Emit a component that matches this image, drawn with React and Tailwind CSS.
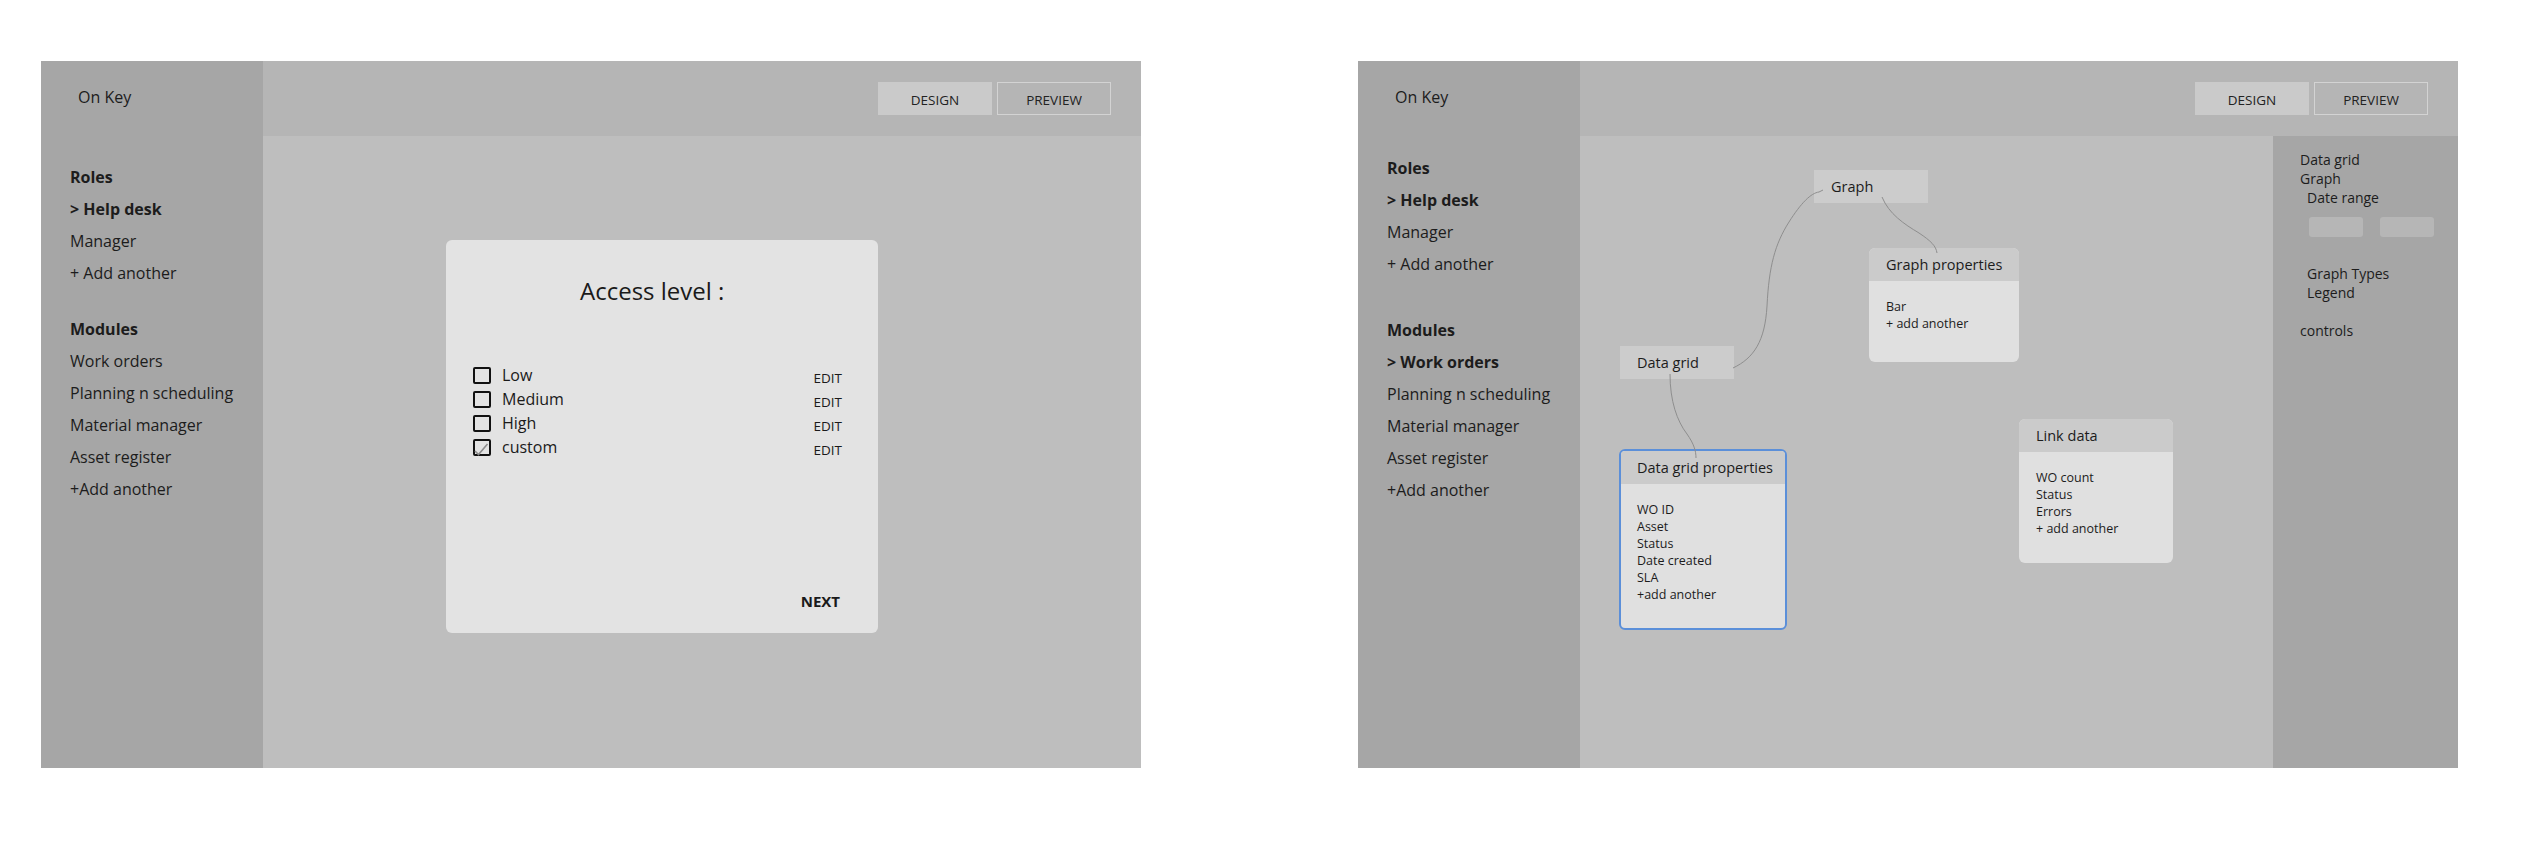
import React from 'react';

const roles = ['> Help desk', 'Manager', '+ Add another'];

function Sidebar({ rolesGap, modulesGap, modules }) {
  return (
    <div className="w-[222px] shrink-0 bg-[#a6a6a6] pl-[29px] text-[16px] text-[#1c1c1c]">
      <div className="pl-[8px] pt-[24px] h-[48px] leading-[24px]">On Key</div>
      <div className={rolesGap}>
        <div className="h-8 flex items-center font-bold">Roles</div>
        {roles.map((r, i) => (
          <div key={r} className={`h-8 flex items-center ${i === 0 ? 'font-bold' : ''}`}>{r}</div>
        ))}
      </div>
      <div className={modulesGap}>
        <div className="h-8 flex items-center font-bold">Modules</div>
        {modules.map((m) => (
          <div key={m.label} className={`h-8 flex items-center ${m.active ? 'font-bold' : ''}`}>{m.label}</div>
        ))}
      </div>
    </div>
  );
}

function Header() {
  return (
    <div className="h-[75px] shrink-0 bg-[#b5b5b5] flex items-center justify-end gap-[5px] pr-[30px] text-[13.5px] text-[#222]">
      <div className="w-[114px] h-[33px] pt-[3px] bg-[#cacaca] flex items-center justify-center">DESIGN</div>
      <div className="w-[114px] h-[33px] pt-[3px] border border-[#d3d3d3] flex items-center justify-center">PREVIEW</div>
    </div>
  );
}

function Checkbox({ checked }) {
  return (
    <div className="relative w-[18px] h-[17px] border-2 border-[#111] rounded-[2px]">
      {checked && (
        <svg className="absolute -left-[2px] -top-[2px]" width="18" height="17" viewBox="0 0 18 17">
          <path d="M2 12 L5.5 15.5 L14.5 5" fill="none" stroke="#8c8c8c" strokeWidth="1.6" />
        </svg>
      )}
    </div>
  );
}

function AccessCard() {
  const levels = [
    { label: 'Low' },
    { label: 'Medium' },
    { label: 'High' },
    { label: 'custom', checked: true },
  ];
  return (
    <div className="w-[432px] h-[393px] bg-[#e3e3e3] rounded-[6px] flex flex-col text-[#1a1a1a]">
      <div className="pt-[35px] pl-[134px] text-[24px] leading-[32px]">Access level :</div>
      <div className="mt-[56px] pl-[27px] pr-[36px]">
        {levels.map((l) => (
          <div key={l.label} className="h-6 flex items-center">
            <Checkbox checked={l.checked} />
            <span className="ml-[11px] text-[16px]">{l.label}</span>
            <span className="ml-auto text-[13.5px] mt-[6px]">EDIT</span>
          </div>
        ))}
      </div>
      <div className="mt-auto pb-[22px] pr-[38px] flex justify-end">
        <span className="text-[15px] font-bold leading-[20px]">NEXT</span>
      </div>
    </div>
  );
}

function PropCard({ title, items, className, selected }) {
  return (
    <div
      className={`absolute rounded-[6px] bg-[#e0e0e0] overflow-hidden text-[#1c1c1c] ${
        selected ? 'border-2 border-[#5b8fd9]' : ''
      } ${className}`}
    >
      <div className={`h-[33px] bg-[#cbcbcb] flex items-center text-[14.5px] ${selected ? 'pl-[16px]' : 'pl-[17px]'}`}>{title}</div>
      <div className={`pt-[17px] text-[12.5px] leading-[17px] ${selected ? 'pl-[16px]' : 'pl-[17px]'}`}>
        {items.map((it) => (
          <div key={it}>{it}</div>
        ))}
      </div>
    </div>
  );
}

function NodeBox({ label, className }) {
  return (
    <div className={`absolute w-[114px] h-[33px] bg-[#cccccc] flex items-center pl-[17px] text-[14.5px] text-[#1c1c1c] ${className}`}>
      {label}
    </div>
  );
}

function Canvas() {
  return (
    <div className="relative flex-1 bg-[#bebebe]">
      <NodeBox label="Graph" className="left-[234px] top-[34px]" />
      <NodeBox label="Data grid" className="left-[40px] top-[210px]" />
      <PropCard title="Graph properties" items={['Bar', '+ add another']} className="left-[289px] top-[112px] w-[150px] h-[114px]" />
      <PropCard
        title="Data grid properties"
        items={['WO ID', 'Asset', 'Status', 'Date created', 'SLA', '+add another']}
        className="left-[39px] top-[313px] w-[168px] h-[181px]"
        selected
      />
      <PropCard
        title="Link data"
        items={['WO count', 'Status', 'Errors', '+ add another']}
        className="left-[439px] top-[283px] w-[154px] h-[144px]"
      />
      {/* connectors between nodes */}
      <svg className="absolute inset-0 pointer-events-none" width="693" height="632">
        <g fill="none" stroke="#8e8e8e" strokeWidth="1">
          <path d="M153 232 C174 222 185 205 187 170 C189 130 195 108 209 86 C221 67 231 57 239 56 L243 54" />
          <path d="M302 61 C309 78 324 88 339 97 C351 105 356 110 357 117" />
          <path d="M90 238 C90 265 97 285 107 298 C114 308 116 315 116 322" />
        </g>
      </svg>
    </div>
  );
}

function PropsPanel() {
  return (
    <div className="w-[185px] shrink-0 bg-[#a6a6a6] pl-[27px] pt-[14px] text-[14px] leading-[19px] text-[#1c1c1c]">
      <div>Data grid</div>
      <div>Graph</div>
      <div className="pl-[7px]">Date range</div>
      <div className="mt-[10px] ml-[9px] flex gap-[17px]">
        <div className="w-[54px] h-[20px] rounded-[3px] bg-[#b6b6b6]" />
        <div className="w-[54px] h-[20px] rounded-[3px] bg-[#b6b6b6]" />
      </div>
      <div className="mt-[27px] pl-[7px]">Graph Types</div>
      <div className="pl-[7px]">Legend</div>
      <div className="mt-[19px]">controls</div>
    </div>
  );
}

export default function App() {
  return (
    <div className="min-h-[846px] w-[2545px] bg-white flex gap-[217px] pt-[61px] pl-[41px] font-['Open_Sans',sans-serif]">
      {/* access level screen */}
      <div className="w-[1100px] h-[707px] flex">
        <Sidebar
          rolesGap="mt-[52px]"
          modulesGap="mt-[24px]"
          modules={[
            { label: 'Work orders' },
            { label: 'Planning n scheduling' },
            { label: 'Material manager' },
            { label: 'Asset register' },
            { label: '+Add another' },
          ]}
        />
        <div className="flex-1 flex flex-col">
          <Header />
          <div className="flex-1 bg-[#bebebe] pl-[183px] pt-[104px]">
            <AccessCard />
          </div>
        </div>
      </div>

      {/* dashboard designer screen */}
      <div className="w-[1100px] h-[707px] flex">
        <Sidebar
          rolesGap="mt-[43px]"
          modulesGap="mt-[34px]"
          modules={[
            { label: '> Work orders', active: true },
            { label: 'Planning n scheduling' },
            { label: 'Material manager' },
            { label: 'Asset register' },
            { label: '+Add another' },
          ]}
        />
        <div className="flex-1 flex flex-col">
          <Header />
          <div className="flex-1 flex">
            <Canvas />
            <PropsPanel />
          </div>
        </div>
      </div>
    </div>
  );
}
